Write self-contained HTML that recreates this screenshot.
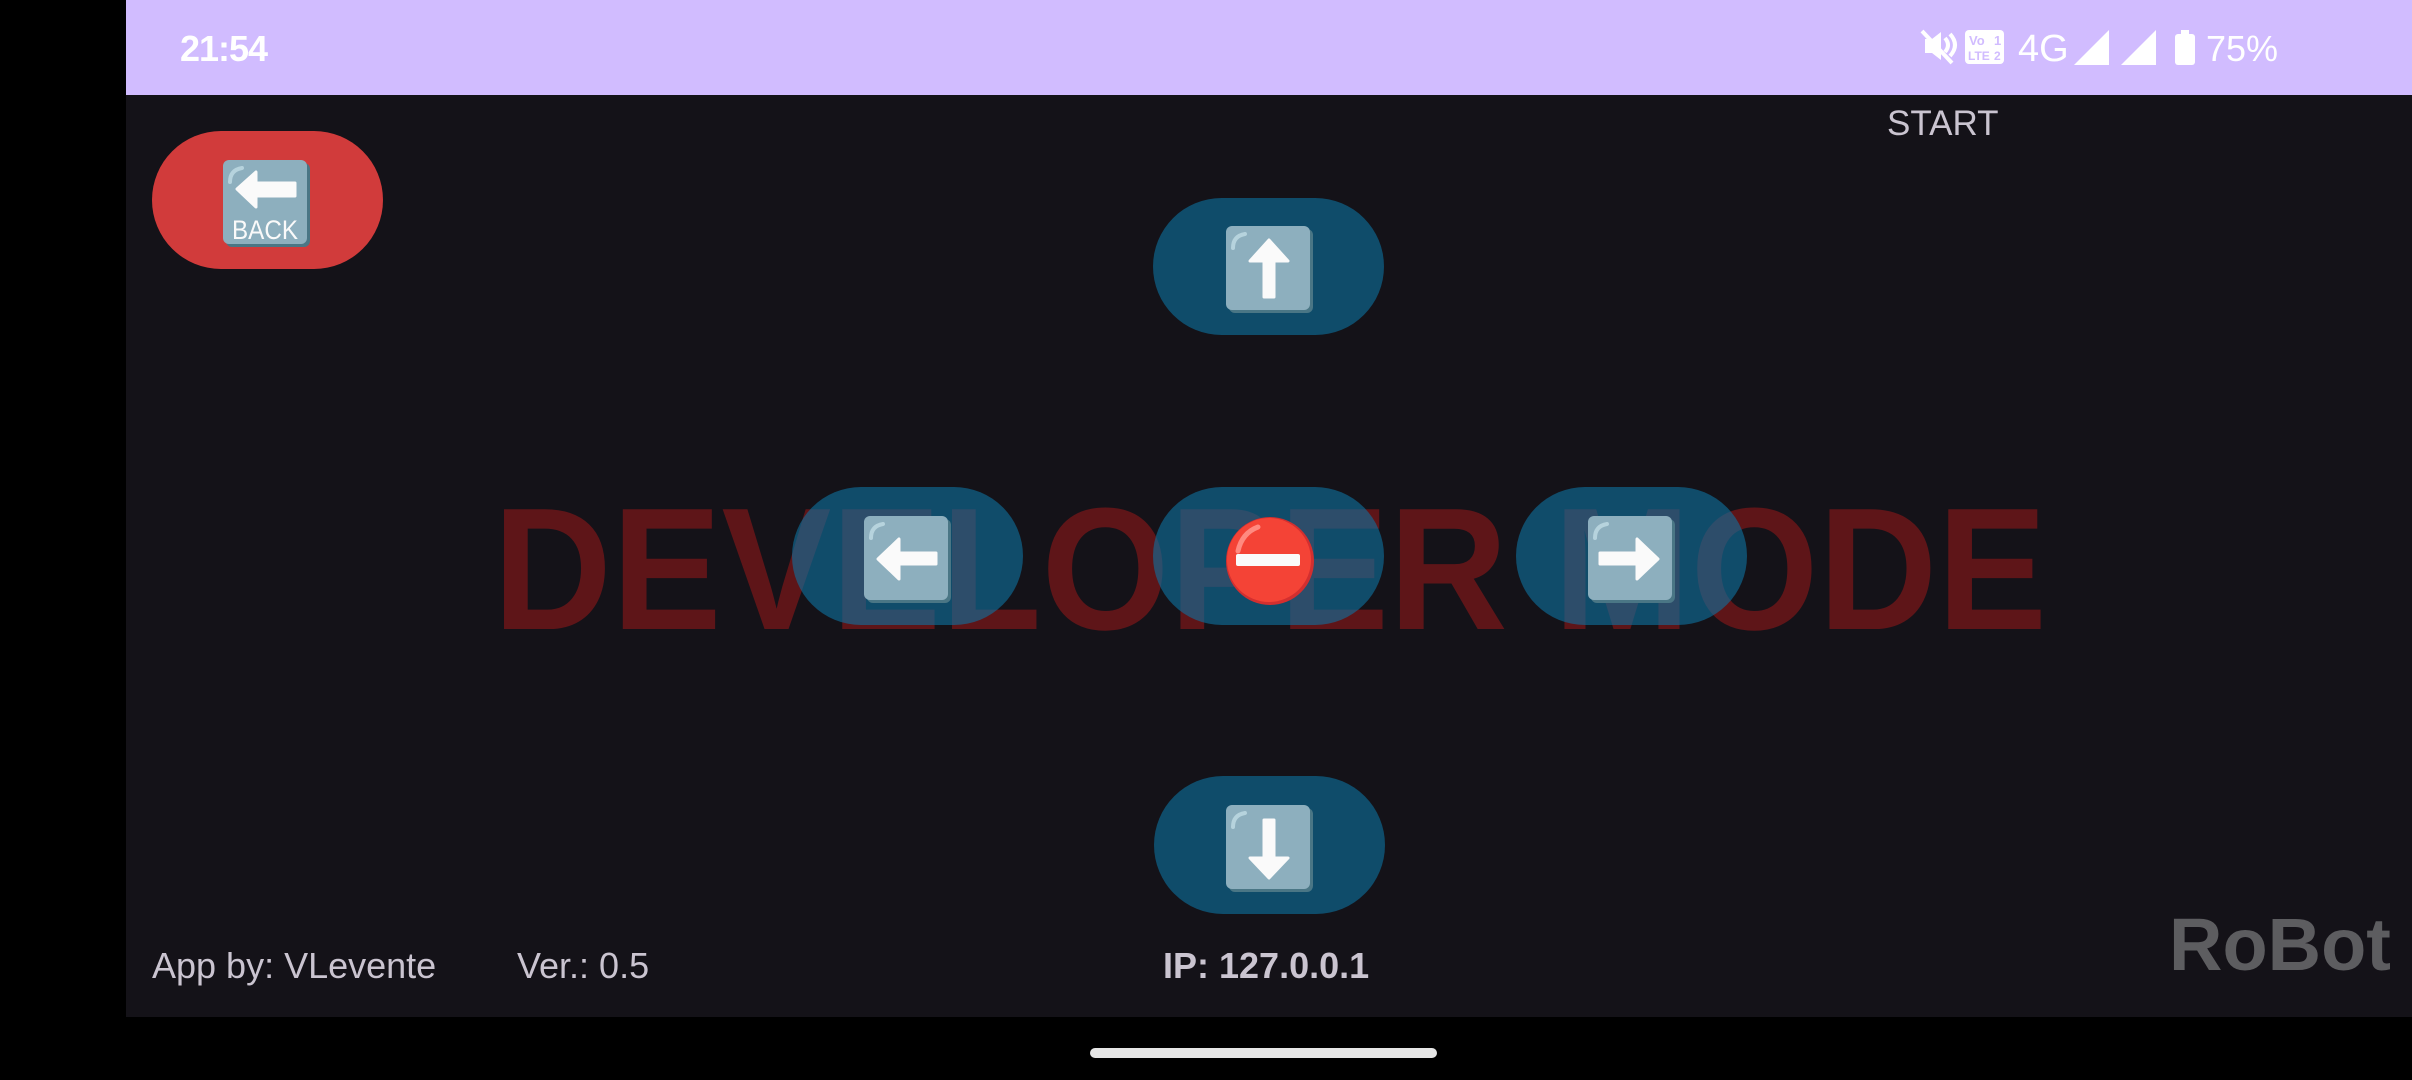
<!DOCTYPE html>
<html><head><meta charset="utf-8">
<style>
*{margin:0;padding:0;box-sizing:border-box}
html,body{width:2412px;height:1080px;overflow:hidden;background:#000}
body{position:relative;font-family:"Liberation Sans",sans-serif}
.status{position:absolute;left:126px;top:0;width:2286px;height:95px;background:#d1bcff}
.main{position:absolute;left:126px;top:95px;width:2286px;height:922px;background:#141218}
.abs{position:absolute}
.btn{position:absolute;width:231px;height:137px;border-radius:69px;background:rgba(13,115,161,0.6)}
.key{position:absolute;width:88px;height:88px}
.t{position:absolute;white-space:nowrap;line-height:1}
</style></head><body>
<div class="status"></div>
<div class="main"></div>
<div class="t" style="left:180px;top:31px;font-size:36px;color:#fff;font-weight:bold;letter-spacing:-1px">21:54</div>

<svg class="abs" style="left:1915px;top:25px" width="300" height="45" viewBox="0 0 300 45">
 <g fill="none" stroke="#fff" stroke-width="4">
  <path d="M10 14 h7 l9 -7 v28 l-9 -7 h-7z" fill="#fff" stroke="none"/>
  <path d="M30 13 q6 7 0 14 M35 9 q10 11 0 22"/>
  <path d="M7 6 L37 38"/>
 </g>
 <rect x="50" y="5" width="39" height="34" rx="4" fill="#fff"/>
 <text x="54" y="20" font-size="13" font-weight="bold" fill="#d1bcff" font-family="Liberation Sans">Vo</text>
 <text x="79" y="20" font-size="13" font-weight="bold" fill="#d1bcff" font-family="Liberation Sans">1</text>
 <text x="53" y="35" font-size="12" font-weight="bold" fill="#d1bcff" font-family="Liberation Sans">LTE</text>
 <text x="79" y="35" font-size="12" font-weight="bold" fill="#d1bcff" font-family="Liberation Sans">2</text>
 <text x="103" y="36" font-size="38" fill="#fff" font-family="Liberation Sans">4G</text>
 <path d="M159 40 L194 5 V40 Z" fill="#fff"/>
 <path d="M206 40 L241 5 V40 Z" fill="#fff"/>
 <rect x="260" y="9" width="20" height="31" rx="3" fill="#fff"/>
 <rect x="266" y="5" width="8" height="5" fill="#fff"/>
</svg>
<div class="t" style="left:2206px;top:31px;font-size:36px;color:#fff">75%</div>

<div class="t" style="left:1887px;top:106px;font-size:35px;color:#cac4d0">START</div>

<svg class="abs" style="left:0;top:0" width="2412" height="1080">
 <text x="493" y="629" font-size="174" font-weight="bold" fill="#5e1518" font-family="Liberation Sans" textLength="1554" lengthAdjust="spacingAndGlyphs">DEVELOPER MODE</text>
</svg>

<div class="btn" style="left:152px;top:131px;height:138px;background:#d13b3b"></div>
<svg class="key" style="left:223px;top:160px" viewBox="0 0 88 88">
 <rect x="3" y="3" width="84" height="84" rx="6" fill="#4a7685"/>
 <rect x="0" y="0" width="84" height="84" rx="6" fill="#8dafbe"/>
 <path d="M7 22 q0-12 12-14" stroke="#b6d3dd" stroke-width="4" fill="none" stroke-linecap="round"/>
 <path d="M14 29 L33 12 V23 H72 V36 H33 V47 Z" fill="#fafafa" stroke="#fafafa" stroke-width="3" stroke-linejoin="round"/>
 <text x="42" y="79" text-anchor="middle" font-size="27" fill="#fafafa" font-family="Liberation Sans" textLength="66" lengthAdjust="spacingAndGlyphs">BACK</text>
</svg>

<div class="btn" style="left:1153px;top:198px;background:#0f4c6a"></div>
<svg class="key" style="left:1226px;top:226px" viewBox="0 0 88 88">
 <rect x="3" y="3" width="84" height="84" rx="6" fill="#4a7685"/>
 <rect x="0" y="0" width="84" height="84" rx="6" fill="#8dafbe"/>
 <path d="M7 22 q0-12 12-14" stroke="#b6d3dd" stroke-width="4" fill="none" stroke-linecap="round"/>
 <path d="M43 14 L62 35 H48 V71 H38 V35 H24 Z" fill="#fafafa" stroke="#fafafa" stroke-width="3" stroke-linejoin="round"/>
</svg>

<div class="btn" style="left:792px;top:487px;height:138px"></div>
<svg class="key" style="left:864px;top:516px" viewBox="0 0 88 88">
 <rect x="3" y="3" width="84" height="84" rx="6" fill="#4a7685"/>
 <rect x="0" y="0" width="84" height="84" rx="6" fill="#8dafbe"/>
 <path d="M7 22 q0-12 12-14" stroke="#b6d3dd" stroke-width="4" fill="none" stroke-linecap="round"/>
 <path d="M14 43 L35 23 V37 H72 V48 H35 V63 Z" fill="#fafafa" stroke="#fafafa" stroke-width="3" stroke-linejoin="round"/>
</svg>

<div class="btn" style="left:1153px;top:487px;height:138px"></div>
<svg class="abs" style="left:1224px;top:515px" width="92" height="92" viewBox="0 0 92 92">
 <circle cx="46" cy="46" r="44" fill="#d32f2f"/>
 <circle cx="45" cy="45" r="42" fill="#f44336"/>
 <path d="M14 36 q4-18 20-24" stroke="#ff8a80" stroke-width="5" fill="none" stroke-linecap="round"/>
 <rect x="12" y="39" width="64" height="12" rx="2" fill="#fafafa"/>
</svg>

<div class="btn" style="left:1516px;top:487px;height:138px"></div>
<svg class="key" style="left:1588px;top:516px" viewBox="0 0 88 88">
 <rect x="3" y="3" width="84" height="84" rx="6" fill="#4a7685"/>
 <rect x="0" y="0" width="84" height="84" rx="6" fill="#8dafbe"/>
 <path d="M7 22 q0-12 12-14" stroke="#b6d3dd" stroke-width="4" fill="none" stroke-linecap="round"/>
 <path d="M70 43 L49 23 V37 H12 V48 H49 V63 Z" fill="#fafafa" stroke="#fafafa" stroke-width="3" stroke-linejoin="round"/>
</svg>

<div class="btn" style="left:1154px;top:776px;height:138px;background:#0f4c6a"></div>
<svg class="key" style="left:1226px;top:805px" viewBox="0 0 88 88">
 <rect x="3" y="3" width="84" height="84" rx="6" fill="#4a7685"/>
 <rect x="0" y="0" width="84" height="84" rx="6" fill="#8dafbe"/>
 <path d="M7 22 q0-12 12-14" stroke="#b6d3dd" stroke-width="4" fill="none" stroke-linecap="round"/>
 <path d="M43 73 L62 53 H48 V15 H38 V53 H24 Z" fill="#fafafa" stroke="#fafafa" stroke-width="3" stroke-linejoin="round"/>
</svg>

<div class="t" style="left:152px;top:948px;font-size:36px;color:#cac4d0">App by: VLevente</div>
<div class="t" style="left:517px;top:948px;font-size:36px;color:#cac4d0">Ver.: 0.5</div>
<div class="t" style="left:1163px;top:948px;font-size:36px;color:#cac4d0;font-weight:bold">IP: 127.0.0.1</div>
<div class="t" style="left:2169px;top:908px;font-size:74px;color:#5d5d60;font-weight:bold">RoBot</div>

<div class="abs" style="left:1090px;top:1048px;width:347px;height:10px;border-radius:5px;background:#e6e6e6"></div>
</body></html>
